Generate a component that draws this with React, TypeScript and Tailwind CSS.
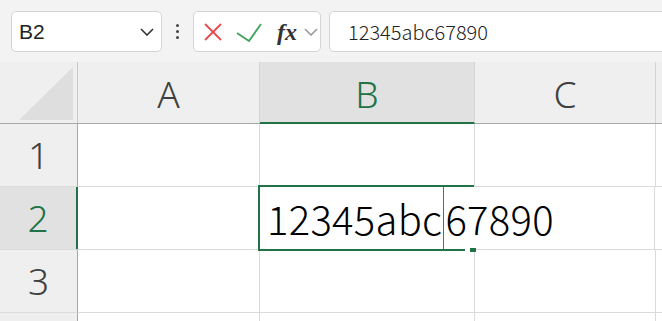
import React from 'react';

const headFont = { fontFamily: '"Noto Sans", "Liberation Sans", sans-serif' };

const Chevron: React.FC<{ className?: string; color: string }> = ({ className, color }) => (
    <svg className={className} viewBox="0 0 14 8" fill="none">
        <polyline points="1,1 7,7 13,1" stroke={color} strokeWidth="1.6" />
    </svg>
);

const App: React.FC = () => {
    return (
        <div className="w-[662px] h-[321px] overflow-hidden bg-white" style={headFont}>
            {/* toolbar */}
            <div className="h-[62px] bg-[#f3f3f3] flex items-start pt-[11px] pl-[11px]">
                <div className="w-[151px] h-[41px] shrink-0 rounded-[5px] border border-[#d4d4d4] bg-white flex items-center justify-between pl-[7px] pr-[7px]">
                    <span className="text-[21px] text-[#222] font-['Liberation_Sans']">B2</span>
                    <Chevron className="w-[14px] h-[8px]" color="#333" />
                </div>
                <div className="w-[31px] h-[41px] shrink-0 flex flex-col items-center justify-center gap-[3px]">
                    <span className="w-[3px] h-[3px] bg-[#444] rounded-full" />
                    <span className="w-[3px] h-[3px] bg-[#444] rounded-full" />
                    <span className="w-[3px] h-[3px] bg-[#444] rounded-full" />
                </div>
                <div className="w-[128px] h-[41px] shrink-0 rounded-[5px] border border-[#d4d4d4] bg-white flex items-center pl-[9px]">
                    <svg className="w-[20px] h-[20px]" viewBox="0 0 20 20" fill="none">
                        <line x1="2" y1="2" x2="18" y2="18" stroke="#e8484d" strokeWidth="1.8" />
                        <line x1="18" y1="2" x2="2" y2="18" stroke="#e8484d" strokeWidth="1.8" />
                    </svg>
                    <svg className="w-[26px] h-[20px] ml-[13px] mt-[2px]" viewBox="0 0 26 20" fill="none">
                        <polyline points="1,10 13,18 25,1" stroke="#3fa35b" strokeWidth="1.8" />
                    </svg>
                    <span className="ml-[15px] text-[24px] italic font-bold text-[#333] font-['Liberation_Serif'] leading-none">fx</span>
                    <Chevron className="w-[14px] h-[8px] ml-[7px]" color="#9a9a9a" />
                </div>
                <div className="ml-[8px] w-[360px] h-[41px] shrink-0 rounded-[5px] border border-[#d4d4d4] bg-white flex items-center pl-[18px]">
                    <span className="text-[20px] font-light text-[#222] font-['Noto_Sans_CJK_JP']">12345abc67890</span>
                </div>
            </div>

            {/* header row */}
            <div className="flex h-[62px] bg-[#efefef] border-b border-[#a8a8a8]">
                <div className="w-[78px] shrink-0 border-r border-[#c8c8c8] flex items-end justify-end pr-[4px] pb-[3px] pt-[5px]">
                    <div className="w-[54px] h-[53px] bg-[#dedede] [clip-path:polygon(100%_0,100%_100%,0_100%)]" />
                </div>
                <div className="w-[182px] shrink-0 border-r border-[#d4d4d4] flex items-center justify-center text-[37px] font-light text-[#404040] pt-[2px]">A</div>
                <div className="w-[215px] shrink-0 border-r border-[#d4d4d4] bg-[#e1e1e1] border-b-2 border-b-[#217346] -mb-px flex items-center justify-center text-[37px] font-light text-[#217346] pt-[3px]">B</div>
                <div className="w-[181px] shrink-0 border-r border-[#d4d4d4] flex items-center justify-center text-[37px] font-light text-[#404040] pt-[2px]">C</div>
                <div className="flex-1" />
            </div>

            {/* row 1 */}
            <div className="flex h-[63px]">
                <div className="w-[78px] shrink-0 bg-[#efefef] border-r border-[#a8a8a8] border-b border-b-[#dcdcdc] flex items-center justify-center text-[37px] font-light text-[#404040]">1</div>
                <div className="w-[182px] shrink-0 border-r border-b border-[#dadada]" />
                <div className="w-[215px] shrink-0 border-r border-b border-[#dadada]" />
                <div className="w-[181px] shrink-0 border-r border-b border-[#dadada]" />
                <div className="flex-1 border-b border-[#dadada]" />
            </div>

            {/* row 2 */}
            <div className="flex h-[63px]">
                <div className="w-[78px] shrink-0 bg-[#e1e1e1] border-r-2 border-[#217346] border-b border-b-[#dcdcdc] flex items-center justify-center text-[37px] font-light text-[#217346]">2</div>
                <div className="w-[182px] shrink-0 border-r border-b border-[#dadada] -ml-px" />
                <div className="relative w-[215px] shrink-0 border-b border-[#dadada] z-10">
                    <div className="absolute -left-px -top-[2px] w-[216px] h-[66px] border-y-2 border-l-2 border-[#217346]" />
                    <div className="absolute right-[3px] -bottom-[3px] w-[6px] h-[4px] bg-white" />
                    <div className="absolute -right-[2px] -bottom-[3px] w-[6px] h-[4px] bg-[#217346]" />
                    <div className="absolute left-[8px] top-0 h-[62px] flex items-center whitespace-nowrap text-[40px] font-light tracking-[0.3px] text-black font-['Noto_Sans_CJK_JP']">
                        <span>12345abc</span>
                        <span className="w-px h-[62px] bg-[#666] ml-[1px] mr-[1px]" />
                        <span>67890</span>
                    </div>
                </div>
                <div className="w-[181px] shrink-0 border-r border-b border-[#dadada]" />
                <div className="flex-1 border-b border-[#dadada]" />
            </div>

            {/* row 3 */}
            <div className="flex h-[63px]">
                <div className="w-[78px] shrink-0 bg-[#efefef] border-r border-[#a8a8a8] border-b border-b-[#dcdcdc] flex items-center justify-center text-[37px] font-light text-[#404040]">3</div>
                <div className="w-[182px] shrink-0 border-r border-b border-[#dadada]" />
                <div className="w-[215px] shrink-0 border-r border-b border-[#dadada]" />
                <div className="w-[181px] shrink-0 border-r border-b border-[#dadada]" />
                <div className="flex-1 border-b border-[#dadada]" />
            </div>

            {/* row 4 */}
            <div className="flex h-[40px]">
                <div className="w-[78px] shrink-0 bg-[#efefef] border-r border-[#a8a8a8]" />
                <div className="w-[182px] shrink-0 border-r border-[#dadada]" />
                <div className="w-[215px] shrink-0 border-r border-[#dadada]" />
                <div className="w-[181px] shrink-0 border-r border-[#dadada]" />
                <div className="flex-1" />
            </div>
        </div>
    );
};

export default App;
